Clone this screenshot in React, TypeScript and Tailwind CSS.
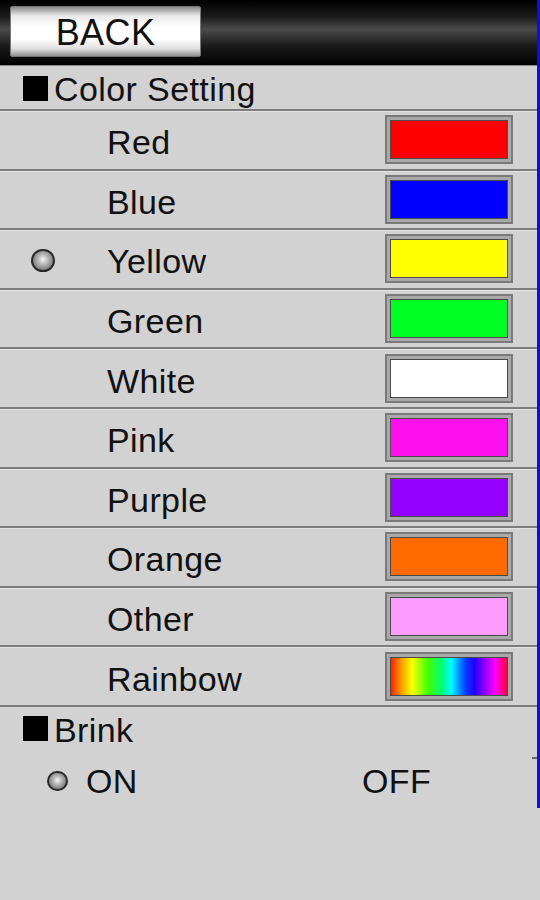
import React, { useState } from 'react';

const colors = [
  { name: 'Red', swatch: 'bg-[#ff0000]' },
  { name: 'Blue', swatch: 'bg-[#0000ff]' },
  { name: 'Yellow', swatch: 'bg-[#ffff00]' },
  { name: 'Green', swatch: 'bg-[#00ff22]' },
  { name: 'White', swatch: 'bg-white' },
  { name: 'Pink', swatch: 'bg-[#ff10ee]' },
  { name: 'Purple', swatch: 'bg-[#9400ff]' },
  { name: 'Orange', swatch: 'bg-[#ff6a00]' },
  { name: 'Other', swatch: 'bg-[#ff9cff]' },
  {
    name: 'Rainbow',
    swatch:
      'bg-[linear-gradient(90deg,#ff2000_0%,#ff9000_8%,#ffff00_18%,#40ff00_32%,#00ff80_45%,#00ffff_52%,#0040ff_64%,#2000ff_72%,#a000ff_82%,#ff00ff_90%,#ff0040_100%)]',
  },
];

const Radio = ({ size }: { size: 'lg' | 'sm' }) => (
  <span
    className={`block rounded-full border-2 border-[#2a2a2a] bg-[radial-gradient(circle_at_50%_45%,#f4f4f4_0%,#a8a8a8_45%,#555_100%)] ${
      size === 'lg' ? 'w-[24px] h-[23px]' : 'w-[21px] h-[20px]'
    }`}
  />
);

const App = () => {
  const [selected, setSelected] = useState('Yellow');
  const [blink, setBlink] = useState(true);

  return (
    <div className="w-[540px] h-[900px] bg-[#d2d2d2] font-['Liberation_Sans',Arial,sans-serif] text-[#111] tracking-[0.4px] flex">
      <div className="flex-1 flex flex-col">
        {/* header */}
        <div className="h-[66px] shrink-0 bg-[linear-gradient(180deg,#000_0%,#1a1a1a_25%,#4a4a4a_45%,#1c1c1c_70%,#000_100%)] border-b border-[#8a8a8a] px-[10px] pt-[6px]">
          <button className="w-[191px] h-[51px] rounded-[2px] border border-[#777] bg-[linear-gradient(180deg,#8c8c8c_0%,#e8e8e8_18%,#fff_40%,#fff_65%,#e0e0e0_85%,#909090_100%)] text-[36px] leading-none text-[#111] flex items-center justify-center pt-[2px]">
            BACK
          </button>
        </div>

        {/* color setting */}
        <div className="h-[45px] shrink-0 flex items-center pl-[23px] border-b-2 border-[#7c7c7c]">
          <span className="w-[25px] h-[25px] bg-black mr-[6px] mt-[1px]" />
          <span className="text-[34px] leading-none pt-[3px]">Color Setting</span>
        </div>

        {colors.map((c) => (
          <div
            key={c.name}
            onClick={() => setSelected(c.name)}
            className="h-[59.6px] shrink-0 flex items-center border-b-2 border-[#7c7c7c] shadow-[inset_0_1px_0_#e4e4e4] cursor-pointer"
          >
            <div className="w-[107px] pl-[31px] flex items-center pt-[3px]">
              {selected === c.name && <Radio size="lg" />}
            </div>
            <span className="flex-1 text-[34px] leading-none pt-[5px]">{c.name}</span>
            <div className="mr-[24px] w-[128px] h-[49px] bg-[#a9a9a9] border-2 border-[#7a7a7a] p-[3px]">
              <div className={`w-full h-full border border-[#4a4a4a] ${c.swatch}`} />
            </div>
          </div>
        ))}

        {/* brink */}
        <div className="h-[44px] shrink-0 flex items-center pl-[23px]">
          <span className="w-[25px] h-[25px] bg-black mr-[6px]" />
          <span className="text-[34px] leading-none pt-[2px]">Brink</span>
        </div>
        <div className="h-[58px] shrink-0 flex items-center">
          <button onClick={() => setBlink(true)} className="flex items-center pl-[47px] w-[300px] pt-[3px]">
            <span className="w-[21px] mr-[18px]">{blink && <Radio size="sm" />}</span>
            <span className="text-[34px] leading-none">ON</span>
          </button>
          <button onClick={() => setBlink(false)} className="flex items-center ml-[62px] pt-[3px]">
            <span className="text-[34px] leading-none">OFF</span>
          </button>
        </div>
      </div>

      {/* right edge */}
      <div className="w-[3px] flex flex-col">
        <div className="h-[808px] bg-[#1010d0] relative">
          <span className="absolute left-[-5px] top-[757px] w-[5px] h-[2px] bg-[#666]" />
        </div>
      </div>
    </div>
  );
};

export default App;
